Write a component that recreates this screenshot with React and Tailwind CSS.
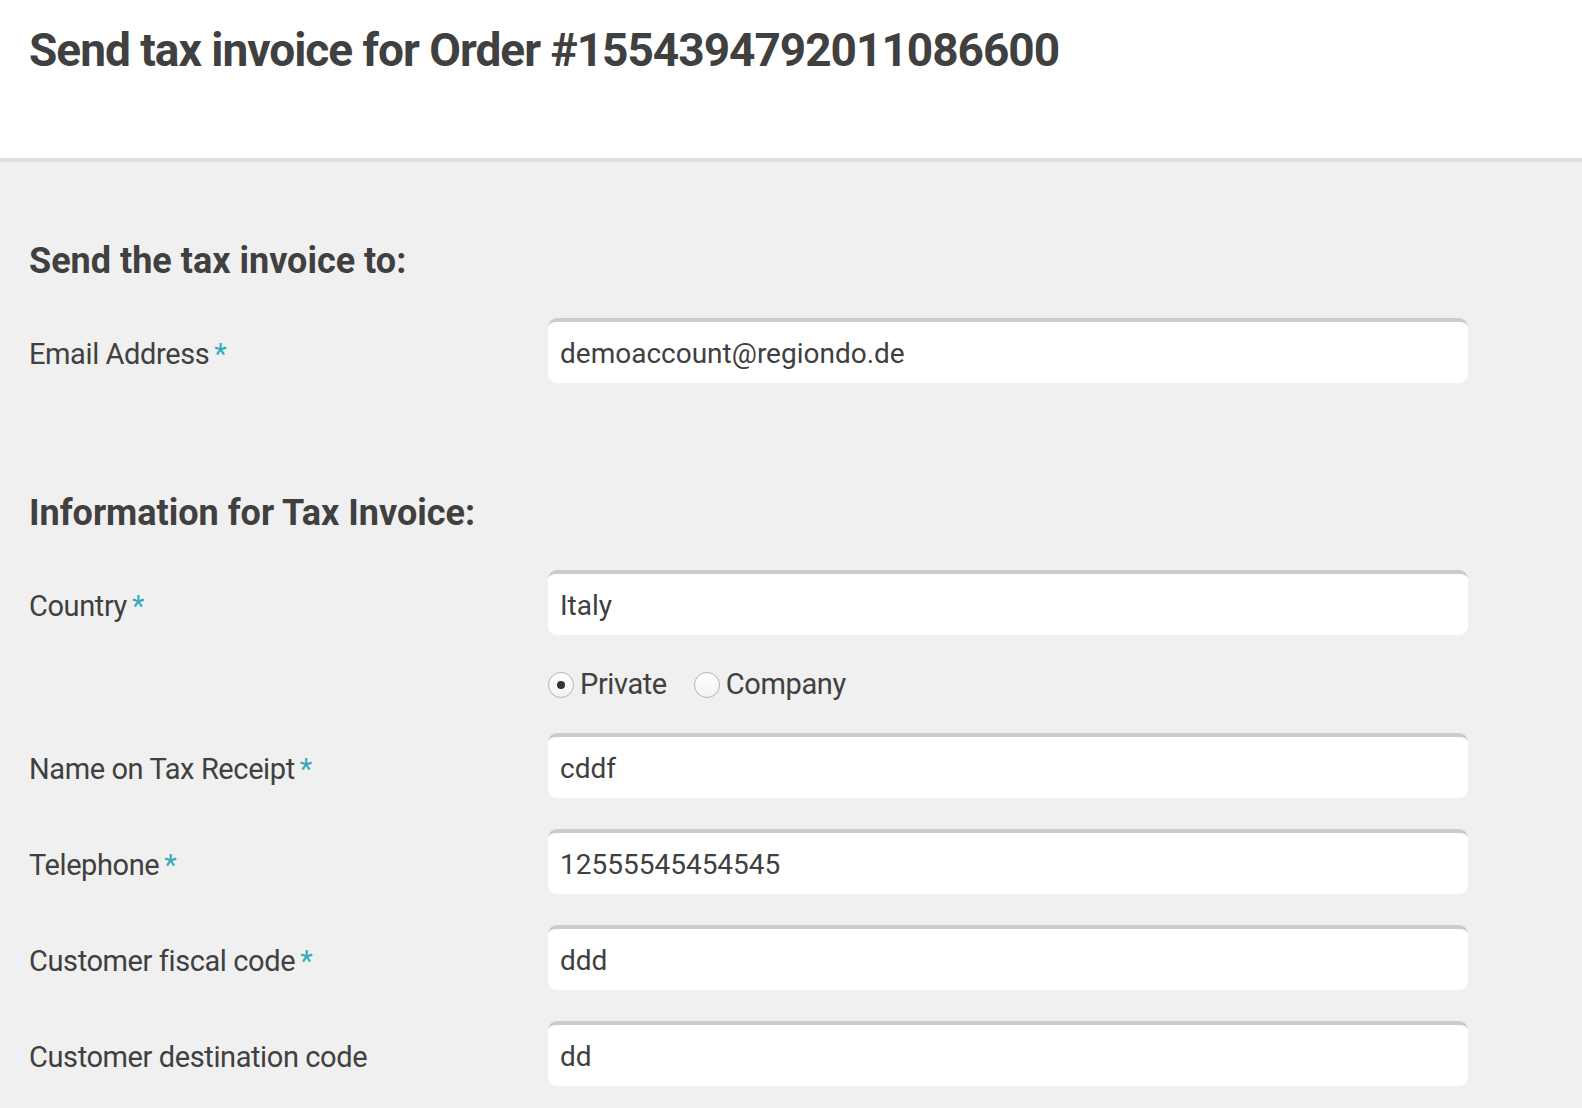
import React from 'react';

const Field = ({ label, required, value, className = '' }) => (
    <div className={`flex items-start ${className}`}>
        <div className="w-[519px] shrink-0 pt-[22px] text-[29px] leading-none tracking-[-0.4px] text-[#404040]">
            {label}
            {required && <span className="ml-[5px] text-[#33aabb]">*</span>}
        </div>
        <div className="w-[920px] h-[65px] bg-white rounded-[9px] border-t-[4px] border-[#cccccc] flex items-center pl-[12px] pt-[3px] text-[28px] text-[#404040]">
            {value}
        </div>
    </div>
);

const Radio = ({ checked, label }) => (
    <label className="flex items-center">
        <span className="w-[26px] h-[26px] rounded-full border border-[#b5b5b5] bg-gradient-to-b from-white to-[#f3f3f3] flex items-center justify-center">
            {checked && <span className="w-[8px] h-[8px] rounded-full bg-[#333333]" />}
        </span>
        <span className="ml-[6px] text-[29px] leading-none tracking-[-0.4px] text-[#404040]">{label}</span>
    </label>
);

const App = () => {
    return (
        <div className="min-h-screen bg-[#f0f0f0] font-['Roboto',sans-serif]">
            <div className="h-[162px] bg-white border-b-[4px] border-[#dedede] pl-[29px] pt-[27px]">
                <h1 className="text-[46px] leading-none font-bold tracking-[-1px] text-[#404040]">
                    Send tax invoice for Order #1554394792011086600
                </h1>
            </div>

            <div className="pl-[29px] pt-[81px] pb-[20px]">
                <h2 className="text-[36px] leading-none font-bold text-[#404040]">Send the tax invoice to:</h2>
                <Field className="mt-[39px]" label="Email Address" required value="demoaccount@regiondo.de" />

                <h2 className="mt-[112px] text-[36px] leading-none font-bold text-[#404040]">Information for Tax Invoice:</h2>
                <Field className="mt-[39px]" label="Country" required value="Italy" />

                <div className="mt-[35px] ml-[519px] flex items-center gap-[27px]">
                    <Radio checked label="Private" />
                    <Radio label="Company" />
                </div>

                <Field className="mt-[34px]" label="Name on Tax Receipt" required value="cddf" />
                <Field className="mt-[31px]" label="Telephone" required value="12555545454545" />
                <Field className="mt-[31px]" label="Customer fiscal code" required value="ddd" />
                <Field className="mt-[31px]" label="Customer destination code" value="dd" />
            </div>
        </div>
    );
};

export default App;
